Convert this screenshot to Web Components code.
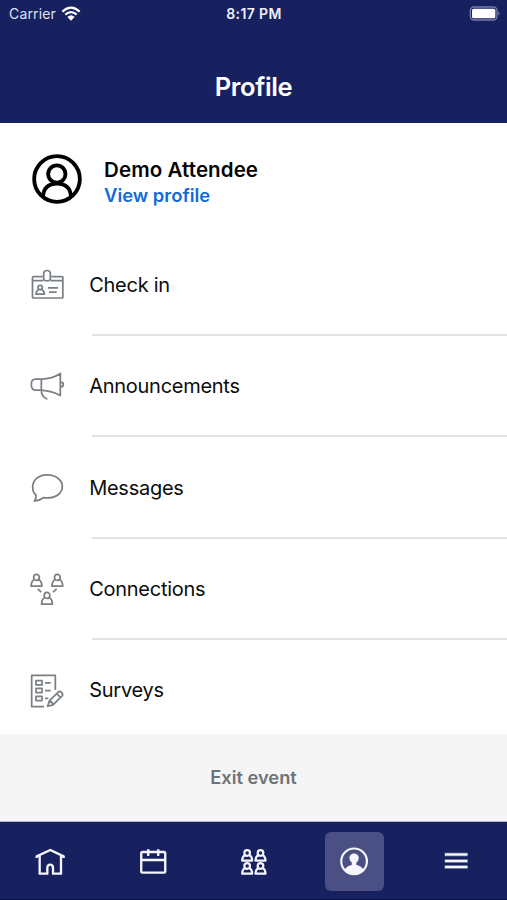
<!DOCTYPE html>
<html lang="en">
<head>
<meta charset="utf-8">
<title>Profile</title>
<style>
html,body{margin:0;padding:0}
body{width:507px;height:900px;overflow:hidden;background:#fff;font-family:Inter,"Liberation Sans",sans-serif}
</style>
</head>
<body>
<profile-screen></profile-screen>
<script>
const define = (name, html) => customElements.define(name, class extends HTMLElement {
  constructor() {
    super();
    this.attachShadow({ mode: 'open' }).innerHTML = html;
  }
});

// Each glyph: [viewBox, markup], three units to a pixel.
const person = (x, y) => `<g transform="translate(${x} ${y})"><ellipse cx="0" cy="-8.5" rx="8.5" ry="9"/><path d="M-6-2C-13 1-16 5-16 18H16C16 5 13 1 6-2"/></g>`;
const small = (x, y) => `<g transform="translate(${x} ${y})"><circle cx="0" cy="-8" r="8.5"/><path d="M-7-1C-13 2-15 6-15 15H15C15 6 13 2 7-1"/></g>`;
const glyphs = {
  badge: ['24 17.5 114 114', `<path d="M68 49.500H40Q37.500 49.500 37.500 52V111Q37.500 113.500 40 113.500H126Q128.500 113.500 128.500 111V52Q128.500 49.500 126 49.500H94M37.500 61.500H70M92 61.500H128.500"/><path d="M71 59V40Q71 31 81 31T91 40V59Q89 62 81 62T71 59Z"/><circle cx="60.500" cy="82" r="6.500"/><path d="M56 88Q48 92 48 102H73Q73 92 65 88M84 83H114M87 96H110"/>`],
  horn: ['24 21.5 114 114', `<path d="M64 55H46Q34 55 34 71T46 88H64ZM64 55Q97 54 121 38V104Q97 91 64 88M64 88Q64 108 82 115M122 64Q130 64 130 71T122 78"/>`],
  bubble: ['24 10.3 114 114', `<path d="M43 106Q50 98 48 89Q38 80 38 65C38 42 57 28 82 28S127 43 127 63S108 97 82 97Q76 97 70 96Q58 106 43 106Z"/>`],
  network: ['24 14.3 114 114', `${person(49.500, 45)}${person(112, 45)}${person(81, 99)}<path d="M53 71L64 81M110 71L99 81"/>`],
  survey: ['24 18.2 114 114', `<path d="M106 72V28H35V122H72M48 44H66V57H48ZM48 67H66V80H48ZM48 91H66V104H48ZM75 51H92M75 74H92M75 97H85"/><path d="M83 121L88 105L116 77Q120 75 125 80T127 89L99 117ZM88 105Q97 108 99 117M110 83L121 94"/>`],
  home: ['92 93 120 120', `<path stroke-width="7" d="M121 138V191H144V174Q144 164 152.500 164T161 174V191H185V138M112 144V139L153 120L193 139V144"/>`],
  calendar: ['396.3 93 120 120', `<rect stroke-width="7" x="424" y="126" width="72" height="62" rx="4"/><path stroke-width="7" d="M423 150H496M445 118V138M475 118V138"/>`],
  group: ['100.500 93 120 120', `<g stroke-width="6.500">${small(143, 137)}${small(183, 137)}${small(143, 176)}${small(183, 176)}</g>`],
  user: ['404.7 93 120 120', `<circle cx="465" cy="154" r="38.500" stroke-width="6.500"/><path fill="currentColor" stroke="none" d="M436 182C440 171 449 167 458 165V157Q451 153 451 144C451 126 479 126 479 144Q479 153 472 157V165C481 167 490 171 494 182C479 199 451 199 436 182Z"/>`],
  menu: ['109 93 120 120', `<path stroke="#8b91bd" stroke-width="10" d="M135 133.500H204M135 153H204M135 171H204"/><path stroke-width="6.500" d="M136 133.500H203M136 153H203M136 171H203"/>`]
};

customElements.define('line-icon', class extends HTMLElement {
  constructor() {
    super();
    const [box, shape] = glyphs[this.getAttribute('name')];
    this.attachShadow({ mode: 'open' }).innerHTML = `
      <style>:host{display:block;width:38px;height:38px;flex:none}svg{display:block;width:100%;height:100%}</style>
      <svg viewBox="${box}" fill="none" stroke="currentColor" stroke-width="5.200" stroke-linejoin="round">${shape}</svg>`;
  }
});

define('status-bar', `
  <style>
    :host{display:grid;grid-template-columns:1fr auto 1fr;align-items:center;height:27px;padding:0 6px 0 9px;font-size:14px;color:#dfe2f3}
    .left{display:flex;align-items:center;gap:5px;letter-spacing:.15px}
    .time{font-weight:600;font-size:14px;letter-spacing:.4px;color:#eef0fb;margin-right:2px}
    .battery{justify-self:end}
    svg{display:block}
  </style>
  <div class="left"><span>Carrier</span>
    <svg width="20" height="16" viewBox="0 0 60 48" fill="none" stroke="#fff" stroke-width="6.500"><path d="M4 17Q30-7 56 17M13 26Q30 11 47 26"/><path fill="#fff" stroke="none" d="M19 33Q30 23 41 33L30 44Z"/></svg>
  </div>
  <span class="time">8:17 PM</span>
  <svg class="battery" width="32" height="15" viewBox="0 0 96 45"><rect x="4" y="3" width="80" height="39" rx="11" fill="none" stroke="#777ca8" stroke-width="4"/><rect x="9" y="8" width="70" height="29" rx="5" fill="#fff"/><path d="M88 16Q95 22 88 29Z" fill="#777ca8"/></svg>`);

define('app-header', `
  <style>
    :host{display:flex;flex-direction:column;height:123px;background:#18215f;color:#fff;flex:none}
    h1{margin:0;padding-top:43px;text-align:center;font-size:25.500px;line-height:33px;font-weight:600;letter-spacing:-.35px}
  </style>
  <slot name="status"></slot>
  <h1><slot></slot></h1>`);

define('profile-card', `
  <style>
    :host{display:flex;align-items:center;height:111.700px;padding-left:31px;gap:21px;box-sizing:border-box;flex:none}
    svg{display:block;width:52px;height:52px}
    .text{padding-top:7px}
    .name{font-size:20.500px;font-weight:600;line-height:26px;letter-spacing:.1px;color:#050505}
    .link{font-size:18.400px;font-weight:600;line-height:25px;color:#126bd6}
  </style>
  <svg viewBox="0 0 156 156" fill="none" stroke="#000" stroke-width="11.500"><circle cx="78" cy="78" r="68.500"/><circle cx="77.500" cy="63" r="26"/><path d="M36 133C37 105 53 92 78 92S119 105 120 133"/></svg>
  <div class="text"><div class="name"><slot></slot></div><div class="link">View profile</div></div>`);

define('menu-row', `
  <style>
    :host{display:flex;align-items:center;height:101.300px;padding-left:28px;gap:23.200px;flex:none;color:#0c0c0c;font-size:20px;letter-spacing:-.27px;--line:#e3e3e4}
    ::slotted(line-icon){color:#7a7f84}
    .body{align-self:stretch;flex:1;display:flex;flex-direction:column;box-sizing:border-box}
    .label{flex:1;display:flex;align-items:center;padding-top:1.500px}
    .rule{height:2px;margin-left:3px;background:var(--line)}
    :host([last]) .rule{background:none}
  </style>
  <slot name="icon"></slot>
  <div class="body"><div class="label"><span><slot></slot></span></div><div class="rule"></div></div>`);

define('exit-bar', `
  <style>:host{display:flex;align-items:center;justify-content:center;height:88px;padding-bottom:2px;background:#f5f5f5;color:#6f7377;font-size:18.300px;font-weight:600;flex:none;box-sizing:border-box}</style>
  <slot></slot>`);

define('tab-item', `
  <style>
    :host{flex:1;display:flex;align-items:center;justify-content:center}
    .tile{width:59px;height:59px;padding:0 1px 1px 0;box-sizing:border-box;border-radius:6px;display:flex;align-items:center;justify-content:center}
    :host([active]) .tile{background:#4a5084}
    ::slotted(line-icon){width:40px;height:40px}
  </style>
  <div class="tile"><slot></slot></div>`);

define('tab-bar', `
  <style>:host{display:flex;height:78px;padding:1px 0 0 0;background:#18215f;color:#f5f6ff;box-sizing:border-box;box-shadow:0 -1px #b5b8cc,inset 0 -1px #0b1040;flex:none;position:relative}</style>
  <slot></slot>`);

define('profile-screen', `
  <style>
    :host{display:flex;flex-direction:column;width:507px;height:900px;overflow:hidden;background:#fff}
    main{display:flex;flex-direction:column;height:611px;overflow:hidden;flex:none}
  </style>
  <app-header><status-bar slot="status"></status-bar>Profile</app-header>
  <main>
    <profile-card>Demo Attendee</profile-card>
    <menu-row><line-icon slot="icon" name="badge"></line-icon>Check in</menu-row>
    <menu-row><line-icon slot="icon" name="horn"></line-icon>Announcements</menu-row>
    <menu-row><line-icon slot="icon" name="bubble"></line-icon>Messages</menu-row>
    <menu-row><line-icon slot="icon" name="network"></line-icon>Connections</menu-row>
    <menu-row last><line-icon slot="icon" name="survey"></line-icon>Surveys</menu-row>
  </main>
  <exit-bar>Exit event</exit-bar>
  <tab-bar>
    <tab-item><line-icon name="home"></line-icon></tab-item>
    <tab-item><line-icon name="calendar"></line-icon></tab-item>
    <tab-item><line-icon name="group"></line-icon></tab-item>
    <tab-item active><line-icon name="user"></line-icon></tab-item>
    <tab-item><line-icon name="menu"></line-icon></tab-item>
  </tab-bar>`);
</script>
</body>
</html>
